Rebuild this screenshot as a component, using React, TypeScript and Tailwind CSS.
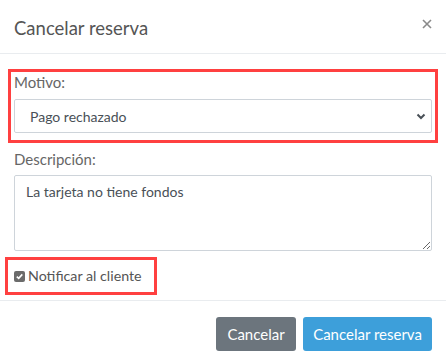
import React from 'react';

export default function App() {
  return (
    <div className="w-[446px] h-[364px] bg-white font-['Lato',sans-serif] text-[#555]">
      {/* header */}
      <div className="h-[54px] border-b border-[#e9ecef] pl-[14px] pr-[14px] pt-[17px] flex justify-between items-start">
        <h5 className="text-[18.5px] leading-[1.2] text-[#555]">Cancelar reserva</h5>
        <svg className="mt-[2px]" width="10" height="10" viewBox="0 0 10 10">
          <path d="M1 1 L9 9 M9 1 L1 9" stroke="#8a8a8a" strokeWidth="1.6" />
        </svg>
      </div>

      {/* body */}
      <div className="px-[14px] pt-[15px] pb-[5px]">
        <div className="-mx-[6px] border-[3px] border-[#ff4040] px-[3px] pb-[7px]">
          <label className="block text-[15px] leading-[20px] text-[#666] mb-[7px]">Motivo:</label>
          <div className="h-[34px] border border-[#ced4da] rounded-[2px] flex items-center justify-between pl-[15px] pr-[5px] text-[14px] text-[#495057]">
            <span>Pago rechazado</span>
            <svg width="10" height="7" viewBox="0 0 10 7">
              <path d="M1.5 1.5 L5 5 L8.5 1.5" stroke="#495057" strokeWidth="2" fill="none" />
            </svg>
          </div>
        </div>

        <label className="block mt-[6px] mb-[6px] text-[15px] leading-[20px] text-[#666]">Descripción:</label>
        <textarea
          readOnly
          defaultValue="La tarjeta no tiene fondos"
          className="block w-full h-[76px] border border-[#ced4da] rounded-[2px] px-[11px] pt-[5px] text-[14px] leading-[1.5] text-[#495057] outline-none"
        />

        <div className="mt-[6px] -ml-[9px] w-[152px] h-[38px] border-[3px] border-[#ff4040] pl-[6px] flex items-center gap-[3px]">
          <span className="w-[11px] h-[11px] rounded-[2px] bg-[#6b6b6b] flex items-center justify-center">
            <svg width="9" height="9" viewBox="0 0 9 9">
              <path d="M1.8 4.6 L3.7 6.4 L7.3 2.4" stroke="#fff" strokeWidth="1.6" fill="none" />
            </svg>
          </span>
          <span className="text-[14.25px] leading-[20px] text-[#555]">Notificar al cliente</span>
        </div>
      </div>

      {/* footer */}
      <div className="border-t border-[#e9ecef] pt-[16px] pr-[14px] flex justify-end gap-[7px]">
        <button className="w-[80px] h-[34px] rounded-[3px] bg-[#6c757d] text-white text-[15px]">Cancelar</button>
        <button className="w-[129px] h-[34px] rounded-[3px] bg-[#3d9fda] text-white text-[15px]">Cancelar reserva</button>
      </div>
    </div>
  );
}
